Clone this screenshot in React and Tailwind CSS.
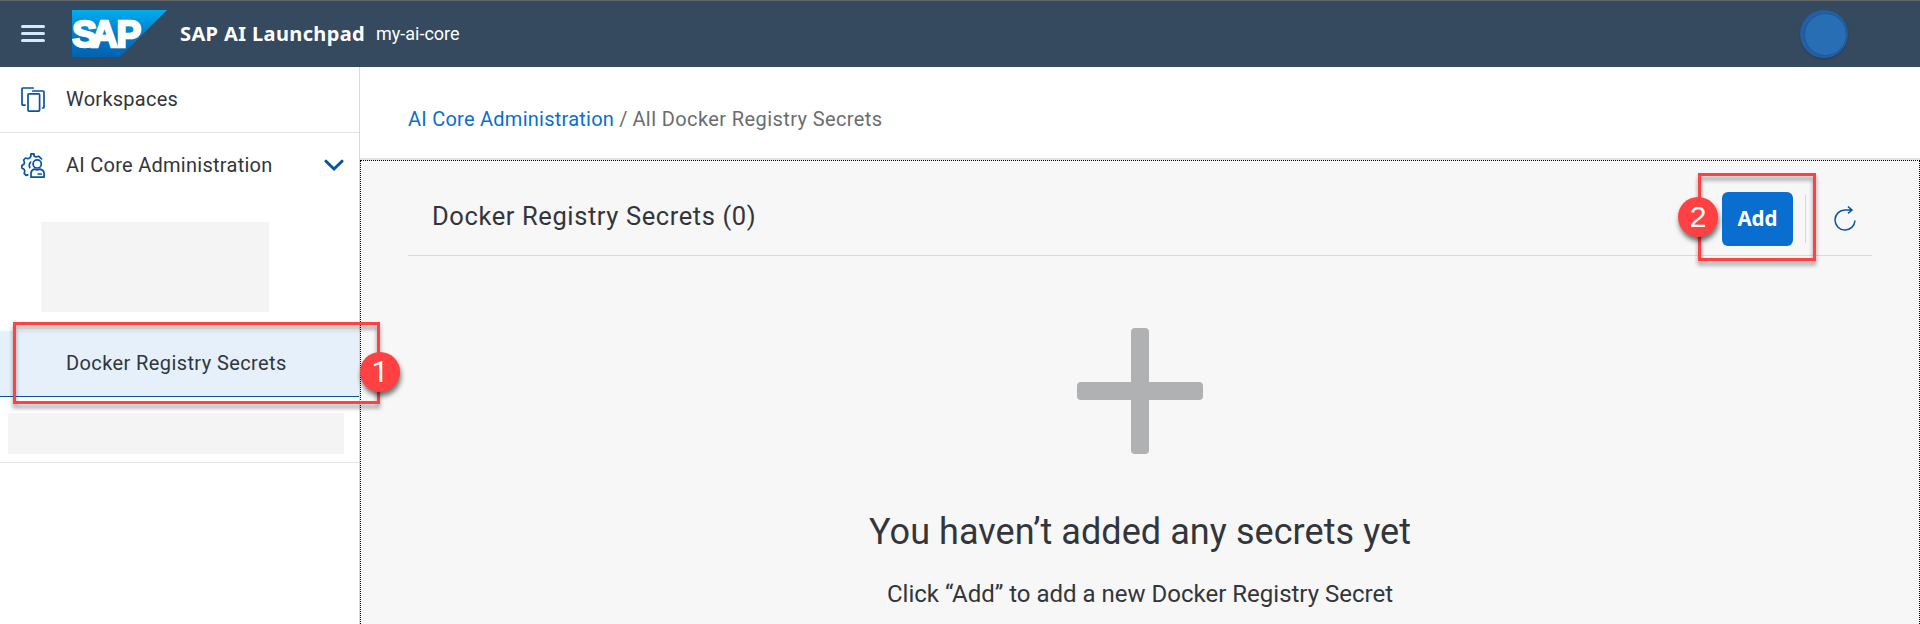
function Logo() {
  return (
    <svg width="95" height="47" viewBox="0 0 95 47" className="mb-px shrink-0">
      <defs>
        <linearGradient id="g" x1="0" y1="0" x2="0" y2="1">
          <stop offset="0" stopColor="#00aeef" />
          <stop offset="0.25" stopColor="#0096dc" />
          <stop offset="0.6" stopColor="#0376c3" />
          <stop offset="1" stopColor="#0062b1" />
        </linearGradient>
      </defs>
      <path d="M0 0H95L48 47H0Z" fill="url(#g)" />
      <text y="37" x="0.3 19 44.6" fontFamily="Liberation Sans" fontWeight="700" fontSize="37" fill="#fff" stroke="#fff" strokeWidth="2.4">SAP</text>
    </svg>
  );
}

function CopyIcon() {
  return (
    <svg width="24" height="25" viewBox="0 0 24 25" fill="none" stroke="#0854a0" strokeWidth="1.7" strokeLinejoin="round" strokeLinecap="round" className="shrink-0">
      <rect x="7" y="6.8" width="11.6" height="17.3" rx="1" />
      <path d="M4 18.2H2.2Q1 18.2 1 17V2Q1 1 2.2 1H12.2" />
      <path d="M11.8 4H22Q23 4 23 5V20Q23 21 22 21H21.6" />
    </svg>
  );
}

function AdminIcon() {
  return (
    <svg width="24" height="25" viewBox="0 0 24 25" fill="none" stroke="#0854a0" strokeWidth="1.7" strokeLinejoin="round" strokeLinecap="round" className="shrink-0">
      <path d="M6.8 21.9L5 22.4L3.2 20.4L3.8 18L3 16.2L.9 15V12.4L2.9 11.3L3.5 9.5L2.6 7L4.6 5L7 5.7L9 4.8L9.9 3V.9H13V3L15 4L17.4 3.2L19.6 5L20.6 6" />
      <path d="M9.6 9.2Q7.4 11.5 8.8 14.6" />
      <circle cx="16.2" cy="10.9" r="4.1" />
      <path d="M10 24.2V19.8Q10.4 16.6 13.6 16.1Q16.2 17.6 18.8 16.1Q22.6 16.8 23.1 19.8V24.2Z" />
      <path d="M17.2 21H20.3" />
    </svg>
  );
}

function Badge({ children }) {
  return (
    <span className="flex h-10 w-10 items-center justify-center rounded-full bg-[#ff4144] text-[30px] leading-none text-white shadow-[1px_4px_5px_rgba(0,0,0,0.55)]">
      {children}
    </span>
  );
}

export default function App() {
  return (
    <div className="relative flex h-[624px] w-[1920px] flex-col overflow-hidden bg-white font-['Roboto',sans-serif] whitespace-nowrap text-[#32363a]">
      <header className="flex h-[67px] shrink-0 items-center border-t border-[#666] bg-[#354a5f] pl-[21px] text-white">
        <div className="mr-[27px] mb-px flex w-6 flex-col gap-1">
          <div className="h-[3px] rounded-sm bg-[#d1e8ff]" />
          <div className="h-[3px] rounded-sm bg-[#d1e8ff]" />
          <div className="h-[3px] rounded-sm bg-[#d1e8ff]" />
        </div>
        <Logo />
        <span className="mb-px ml-[13px] w-[196px] font-['Noto_Sans',sans-serif] text-[20px] font-bold tracking-[0.38px]">SAP AI Launchpad</span>
        <span className="mb-[2px] text-[18px]">my-ai-core</span>
        <div className="mr-[72px] ml-auto flex h-12 w-12 items-center justify-center rounded-full bg-[#245fa5] shadow-[0_1px_2px_rgba(0,0,0,0.2)]">
          <div className="mt-px ml-[2px] h-[43px] w-[43px] rounded-full border border-[#1d5797] bg-[#286eb4]" />
        </div>
      </header>
      <div className="flex min-h-0 flex-1">
        <nav className="flex w-[360px] shrink-0 flex-col border-r border-[#d9d9d9] text-[20px]">
          <div className="flex h-[66px] shrink-0 items-center border-b border-[#e4e4e4] pl-[21px]">
            <CopyIcon />
            <span className="mb-[2px] ml-[21px] tracking-[0.25px]">Workspaces</span>
          </div>
          <div className="flex h-[65px] shrink-0 items-center pr-[15px] pl-[21px]">
            <AdminIcon />
            <span className="mb-[2px] ml-[21px] tracking-[0.27px]">AI Core Administration</span>
            <svg width="20" height="13" viewBox="0 0 20 13" fill="none" stroke="#0854a0" strokeWidth="3" className="ml-auto" strokeLinecap="round">
              <path d="M2 2.2L10 10L18 2.2" />
            </svg>
          </div>
          <div className="mt-6 ml-[41px] h-[90px] w-[228px] shrink-0 bg-[#f4f4f4]" />
          <div className="mt-[19px] flex h-[66px] shrink-0 items-center border-b border-[#0854a0] bg-[#e5f0fa] pb-[2px] pl-[66px] tracking-[0.4px]">
            Docker Registry Secrets
          </div>
          <div className="mt-4 ml-2 h-[41px] w-[336px] shrink-0 bg-[#f4f4f4]" />
          <div className="mt-2 h-px shrink-0 bg-[#e4e4e4]" />
        </nav>
        <main className="flex flex-1 flex-col">
          <div className="flex h-[93px] shrink-0 items-center border-b-2 border-[#e2e2e2] pt-[12px] pl-12 text-[20px] text-[#6a6d70]">
            <span className="tracking-[0.25px] text-[#0a6ed1]">AI Core Administration</span>
            <span className="ml-[5px]">/</span>
            <span className="ml-[5px] tracking-[0.4px]">All Docker Registry Secrets</span>
          </div>
          <section className="flex flex-1 flex-col border-x border-t border-dotted border-black bg-[#f7f7f7] px-[47px]">
            <div className="flex h-[95px] shrink-0 items-center border-b border-[#d9d9d9] pt-[21px] pl-6">
              <h1 className="mb-[4px] text-[25.5px] tracking-[0.6px]">Docker Registry Secrets (0)</h1>
              <button className="ml-auto h-[54px] w-[71px] rounded-md bg-[#0a6ed1] font-['Noto_Sans',sans-serif] text-[20.5px] font-bold text-white">Add</button>
              <div className="ml-3 h-12 w-px bg-[#d9d9d9]" />
              <svg width="22" height="25" viewBox="0 0 22 25" fill="none" stroke="#0854a0" strokeWidth="1.5" className="mr-4 ml-7">
                <path d="M18 4H11A10 10 0 1 0 21 14.5M14 .7L18 4L14 7.3" />
              </svg>
            </div>
            <div className="flex flex-col items-center">
              <svg width="126" height="126" viewBox="0 0 126 126" fill="#b0b1b3" className="mt-[72px]">
                <rect x="54" width="18" height="126" rx="4" />
                <rect y="54" width="126" height="18" rx="4" />
              </svg>
              <h2 className="mt-[56px] text-[36px] leading-[44px] tracking-[0.06px]">You haven’t added any secrets yet</h2>
              <p className="mt-[25px] text-[24px] leading-[30px]">Click “Add” to add a new Docker Registry Secret</p>
            </div>
          </section>
        </main>
      </div>
      <div className="absolute top-[322px] left-[13px] h-[82px] w-[367px] border-3 border-[#ff4144] drop-shadow-[0_4px_2px_rgba(0,0,0,0.4)]" />
      <div className="absolute top-[352px] left-[360px]"><Badge>1</Badge></div>
      <div className="absolute top-[173px] left-[1698px] h-[88px] w-[118px] border-3 border-[#ff4144] drop-shadow-[0_4px_2px_rgba(0,0,0,0.4)]" />
      <div className="absolute top-[197px] left-[1678px] font-['Liberation_Sans',sans-serif]"><Badge>2</Badge></div>
    </div>
  );
}
